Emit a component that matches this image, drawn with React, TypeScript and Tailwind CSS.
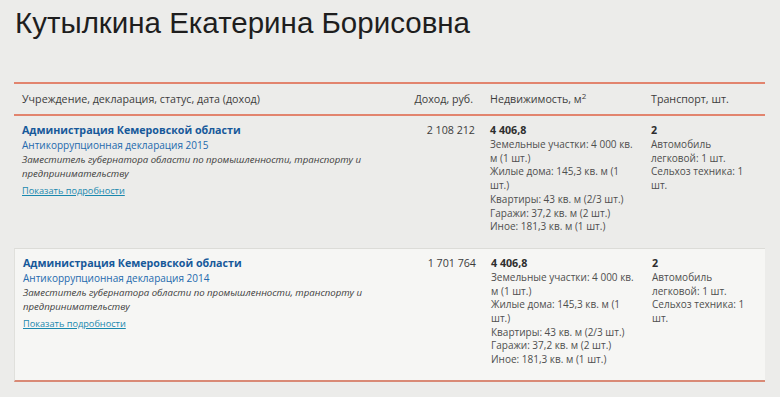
import React from "react";

type Row = {
  org: string;
  decl: string;
  pos: string;
  income: string;
  bg: string;
};

const rows: Row[] = [
  {
    org: "Администрация Кемеровской области",
    decl: "Антикоррупционная декларация 2015",
    pos: "Заместитель губернатора области по промышленности, транспорту и предпринимательству",
    income: "2 108 212",
    bg: "",
  },
  {
    org: "Администрация Кемеровской области",
    decl: "Антикоррупционная декларация 2014",
    pos: "Заместитель губернатора области по промышленности, транспорту и предпринимательству",
    income: "1 701 764",
    bg: "bg-[#f6f6f4]",
  },
];

const realty = [
  "Земельные участки: 4 000 кв. м (1 шт.)",
  "Жилые дома: 145,3 кв. м (1 шт.)",
  "Квартиры: 43 кв. м (2/3 шт.)",
  "Гаражи: 37,2 кв. м (2 шт.)",
  "Иное: 181,3 кв. м (1 шт.)",
];

const transport = ["Автомобиль легковой: 1 шт.", "Сельхоз техника: 1 шт."];

const grid = "grid grid-cols-[390px_78px_161px_122px]";

export default function App() {
  return (
    <div className="w-[780px] h-[397px] overflow-hidden bg-[#ececea] text-[#3a3a3a]" style={{ fontFamily: '"Open Sans", sans-serif' }}>
      <h1
        className="pl-[15px] pt-[6px] text-[29.5px] leading-[34px] text-[#1e1e1e]"
        style={{ fontFamily: '"Liberation Sans", Arial, sans-serif' }}
      >
        Кутылкина Екатерина Борисовна
      </h1>
      <div className="ml-[14px] mt-[42px] w-[751px]">
        <div className={`${grid} border-t-2 border-b-2 border-[#e2846e] text-[10.7px] leading-[14px] text-[#3c3c3c] h-[34px] items-center`}>
          <div className="pl-[8px]">Учреждение, декларация, статус, дата (доход)</div>
          <div className="text-right pr-[9px]">Доход, руб.</div>
          <div className="pl-[8px]">
            Недвижимость, м<span className="text-[8px] relative -top-[4px]">2</span>
          </div>
          <div className="pl-[8px]">Транспорт, шт.</div>
        </div>
        {rows.map((r, i) => (
          <div
            key={i}
            className={`${grid} ${r.bg} text-[10px] leading-[13.7px] pt-[6px] ${
              i > 0 ? "border-t border-[#dcdcd8] pb-[13px]" : "pb-[14px]"
            } ${i === rows.length - 1 ? "border-b-2 border-b-[#d98a76] border-l border-l-[#e0e0dc]" : ""}`}
          >
            <div className="pl-[8px] pr-[8px]">
              <div className="font-bold text-[10.7px] leading-[16px] text-[#17599a]">{r.org}</div>
              <div className="text-[#2369ad] leading-[15px]">{r.decl}</div>
              <div className="italic text-[9.6px] text-[#3c3c3c] leading-[14px]">{r.pos}</div>
              <div className="mt-[3px] text-[9.2px] leading-[14px] text-[#1a88ae] underline">Показать подробности</div>
            </div>
            <div className="text-right pr-[7px] text-[10.7px] text-[#3c3c3c] leading-[16px]">{r.income}</div>
            <div className="pl-[8px] pr-[7px]">
              <div className="font-bold text-[10.7px] text-[#2e2e2e] leading-[16px]">4 406,8</div>
              {realty.map((t) => (
                <div key={t} className="text-[#4e4e4e]">
                  {t}
                </div>
              ))}
            </div>
            <div className="pl-[8px] pr-[14px]">
              <div className="font-bold text-[10.7px] text-[#2e2e2e] leading-[16px]">2</div>
              {transport.map((t) => (
                <div key={t} className="text-[#4e4e4e]">
                  {t}
                </div>
              ))}
            </div>
          </div>
        ))}
      </div>
    </div>
  );
}
